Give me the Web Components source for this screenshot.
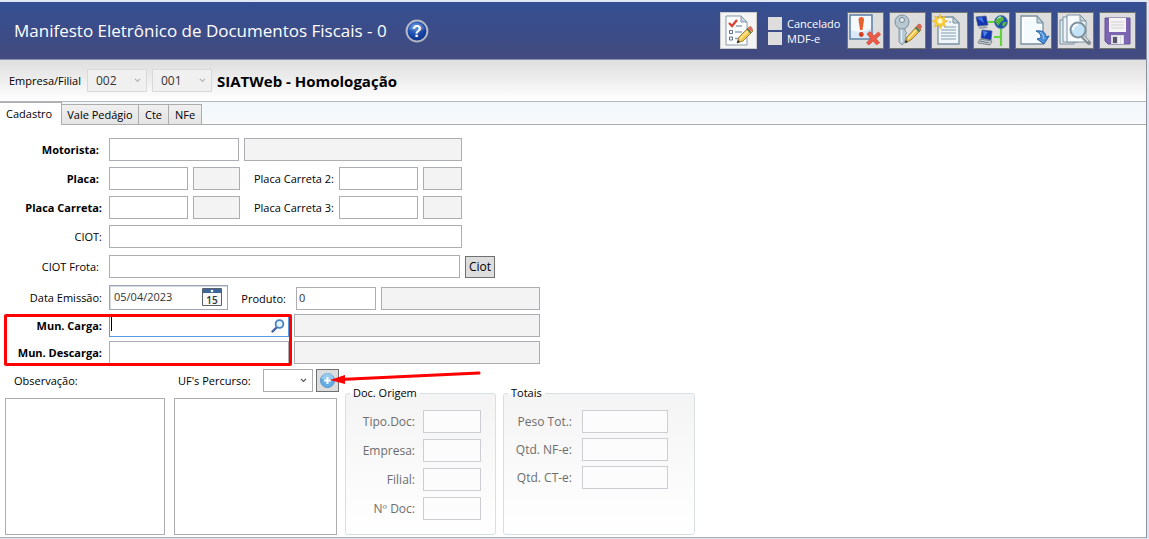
<!DOCTYPE html>
<html lang="pt-BR">
<head>
<meta charset="utf-8">
<title>Manifesto Eletrônico de Documentos Fiscais</title>
<style>
body { margin: 0; background: #fff; color: #000; font: 11px/16px "Open Sans", "Noto Sans", sans-serif; }
</style>
</head>
<body>
<mdf-window></mdf-window>

<template id="t-window">
<style>
:host { display: block; box-sizing: border-box; min-height: 100vh; background: #dfe6f6; padding: 2px 2px 1px 0; }
main { border-right: 1px solid #8e929c; background: #fff; }
</style>
<main>
  <mdf-header></mdf-header>
  <mdf-company></mdf-company>
  <mdf-tabs></mdf-tabs>
  <mdf-form></mdf-form>
</main>
</template>

<template id="t-header">
<style>
:host { display: flex; align-items: center; height: 57px; padding: 0 10px 0 14px; background: linear-gradient(#344f92, #434a7e); border-bottom: 1px solid #8a90ae; color: #fff; }
h1 { margin: 0 18px 0 0; font-size: 17px; line-height: 24px; font-weight: 400; white-space: nowrap; }
.help { border: 0; padding: 0; background: none; width: 24px; height: 24px; margin-right: auto; }
.help svg { display: block; }
.checks { display: grid; gap: 2px; margin: 0 5px 0 11px; width: 74px; }
.checks label { display: flex; align-items: center; gap: 5px; height: 13px; white-space: nowrap; line-height: 13px; }
.checks input { appearance: none; margin: 0; width: 14px; height: 13px; background: #ddd; flex: none; }
.tools { display: flex; gap: 5px; }
</style>
<h1>Manifesto Eletrônico de Documentos Fiscais - 0</h1>
<button class="help" aria-label="Ajuda">
  <svg width="24" height="24" viewBox="0 0 24 24">
    <defs><radialGradient id="g" cx=".4" cy=".3" r=".8"><stop offset="0" stop-color="#4a80d4"/><stop offset=".55" stop-color="#1746a6"/><stop offset="1" stop-color="#0c2b7c"/></radialGradient></defs>
    <circle cx="12" cy="12" r="10.400" fill="url(#g)" stroke="#b4b8c2" stroke-width="2"/>
    <path d="M4 10a8.300 8.300 0 0 1 16 0c-5 2-11 2-16 0Z" fill="#fff" opacity=".16"/>
    <text x="12" y="18" text-anchor="middle" font-size="16" font-weight="700" fill="#fff">?</text>
  </svg>
</button>
<tool-button light name="Validar">
  <svg viewBox="0 0 35 35">
    <path d="M5 3h15l6 6v23H5z" fill="#fbfdfe" stroke="#8799a5"/><path d="M20 3v6h6z" fill="#c8d6df" stroke="#8799a5"/>
    <path d="M8 10l3 3 5-6" fill="none" stroke="#d8432f" stroke-width="2.300"/>
    <path d="M8.500 17.500h3v3h-3zM8.500 24h3v3h-3z" fill="#fff" stroke="#5c7080"/>
    <path d="M15 13h6M14 19h7M14 25.500h5" stroke="#8fa5b5" stroke-width="1.500"/>
    <path d="M16 30l2-6 10-10 4 4-10 10z" fill="#f2c64c" stroke="#80601d" stroke-width=".7"/><path d="M19 26l10-10" stroke="#fff0a5" stroke-width="1.300"/>
    <path d="M26 16l3-3q2 0 3 4l-3 2z" fill="#dc7566"/><path d="M26 16l4 4" stroke="#4c7a58" stroke-width="1.500"/><path d="M16 30l1-3 2 2z" fill="#222"/>
  </svg>
</tool-button>
<div class="checks">
  <label><input type="checkbox">Cancelado</label>
  <label><input type="checkbox">MDF-e</label>
</div>
<div class="tools">
<tool-button name="Cancelar">
  <svg viewBox="0 0 35 35">
    <path d="M2 2h22v24H2z" fill="#d9e9f8" stroke="#5f80a5" stroke-width="1.500"/><path d="M3 17c8 3 14 2 20-2V3H3z" fill="#fff" opacity=".7"/>
    <path d="M10.500 7q0-3 2.800-3t2.700 3l-1.500 10h-2.400z" fill="#e8602c"/><circle cx="13.300" cy="21.500" r="2.400" fill="#d93a1c"/>
    <path d="M19 21l3-2.500 4 4.500 4.500-4 2 2.500-4.500 4.200 3.500 4-3 2-3.500-3.700-4 4-2.500-2 4.200-4.500z" fill="#ec5a48" stroke="#d0402f" stroke-width=".7"/>
  </svg>
</tool-button>
<tool-button name="Chave">
  <svg viewBox="0 0 35 35">
    <path d="M9 14h6v4l2 2-2 2 1 2-1 3v2l-3 3-3-3z" fill="#b8cad5" stroke="#768b98" stroke-width=".8"/><path d="M11.500 16v13" stroke="#edf3f6"/>
    <circle cx="12" cy="9" r="7" fill="#b8c8d2" stroke="#7b909d"/><circle cx="12" cy="7" r="2.500" fill="#e3e7e9" stroke="#738896"/>
    <path d="M15 30l2-6 10-11 4 4-10 10z" fill="#efc047" stroke="#80601d" stroke-width=".7"/><path d="M18 26l10-11" stroke="#fff0a5" stroke-width="1.300"/>
    <path d="M26 14l2-3q3-1 4 3l-2 3z" fill="#d86657"/><path d="M25.500 14.500l4 4" stroke="#4c7a58" stroke-width="1.800"/><path d="M15 30l1-3 2 2z" fill="#222"/>
  </svg>
</tool-button>
<tool-button name="Novo">
  <svg viewBox="0 0 35 35">
    <path d="M6 4h15l6 6v21H6z" fill="#eff5f8" stroke="#7891a0" stroke-width="1.300"/><path d="M21 4v6h6z" fill="#bfd0d9" stroke="#7891a0"/>
    <path d="M17 9h2M12 14h12M9 17h15M9 20h15M9 23h15M9 26h15" stroke="#a8bbc8" stroke-width="1.500"/>
    <path d="M8 1l1.500 4L13 3l-1 4 4 1-4 2 2 4-4-2-1.500 4-2-4-4 2 1.500-4L0 8l4-1.500L2.500 3l4 2z" fill="#f8ce35" stroke="#e8af29" stroke-width=".6"/><circle cx="8" cy="8" r="2.500" fill="#fffbd5"/>
  </svg>
</tool-button>
<tool-button name="Transmitir">
  <svg viewBox="0 0 35 35">
    <path d="M14 9h8M27 15v18M20 24h7" fill="none" stroke="#61d43d" stroke-width="2.200"/>
    <path d="M2 4l10-1 2 9-10 1z" fill="#1535b3" stroke="#4c5c80" stroke-width=".7"/><path d="M3 5l5-1 2 6z" fill="#4478e8"/><path d="M4 14l8-1 2 2-8 1z" fill="#9ba5ad"/>
    <circle cx="27" cy="9" r="6.500" fill="#2054b4" stroke="#4d6d96" stroke-width=".6"/><path d="M25 3l4 1 1 3-3 2-3 4-3-5zM29 9l4 0-3 5-2-2z" fill="#56b540"/><path d="M23 6q1-2 4-2" stroke="#cceeff" fill="none"/>
    <path d="M8 17l10 1-1 9-10-2z" fill="#1537b4" stroke="#4c5c80" stroke-width=".7"/><path d="M9 18l5 1-4 5z" fill="#4c83e9"/><path d="M6 26l12 2-2 4-12-2z" fill="#c5cdd4" stroke="#56616b" stroke-width=".7"/><path d="M6 28l9 2" stroke="#6d7881"/>
  </svg>
</tool-button>
<tool-button name="Exportar">
  <svg viewBox="0 0 35 35">
    <path d="M5 3h16l6 7v21H5z" fill="#f5fafc" stroke="#7891a0" stroke-width="1.300"/><path d="M21 3v7h6z" fill="#bfd0d9" stroke="#7891a0"/><path d="M7 29V5h12" fill="none" stroke="#fff" stroke-width="2"/>
    <path d="M20 18c7-1 10 2 10 6l3-1-5 8-7-5 4-1c0-3-1-5-5-7z" fill="#4f91d9" stroke="#2861a7"/><path d="M24 19q4 2 4 7" stroke="#a7cff5" fill="none"/>
  </svg>
</tool-button>
<tool-button name="Visualizar">
  <svg viewBox="0 0 35 35">
    <path d="M2 7h14v24H2z" fill="#dfe9ee" stroke="#7891a0"/><path d="M5 4h15v25H5z" fill="#edf3f6" stroke="#7891a0"/>
    <path d="M9 2h13l6 6v21H9z" fill="#f8fbfc" stroke="#7891a0"/><path d="M22 2v6h6z" fill="#c5d4dc" stroke="#7891a0"/>
    <path d="M24 23l7 7" stroke="#828d95" stroke-width="4" stroke-linecap="round"/><path d="M25 23l5 5" stroke="#e1e5e8" stroke-width="1.200"/>
    <circle cx="20" cy="17" r="7.500" fill="#c3e2f5" stroke="#82929d" stroke-width="2"/><path d="M15 17q0-5 5-5.500" stroke="#fff" stroke-width="2" fill="none"/>
  </svg>
</tool-button>
<tool-button name="Salvar">
  <svg viewBox="0 0 35 35">
    <path d="M5 5h25v26H8l-3-3z" fill="#7c65b1" stroke="#66509a"/><path d="M9 5h17v14H9z" fill="#f5f4f5"/><path d="M11 9h13M11 12h13M11 15h13" stroke="#d0cfd2"/>
    <path d="M11 22h13v9H11z" fill="#d8dcde"/><path d="M13 24h4v6h-4z" fill="#59546b"/><path d="M19 23v8M22 23v8" stroke="#fff"/>
  </svg>
</tool-button>
</div>
</template>

<template id="t-tool">
<style>
:host { display: block; flex: none; }
button { display: block; width: 37px; height: 37px; padding: 0; border: 1px solid #77766d; background: #ddd; }
:host([light]) button { background: #f4f4f4; border-color: #ccc; }
::slotted(svg) { display: block; width: 35px; height: 35px; }
</style>
<button><slot></slot></button>
</template>

<template id="t-company">
<style>
:host { display: flex; align-items: center; gap: 5px; height: 41px; padding-left: 9px; background: linear-gradient(#dedede, #fff); border-bottom: 1px solid #b4b6ba; }
span { width: 73px; white-space: nowrap; }
strong { font-size: 15px; line-height: 20px; white-space: nowrap; }
mdf-select { --w: 60px; }
</style>
<span>Empresa/Filial</span>
<mdf-select disabled value="002" name="Empresa"></mdf-select>
<mdf-select disabled value="001" name="Filial"></mdf-select>
<strong>SIATWeb - Homologação</strong>
</template>

<template id="t-select">
<style>
:host { display: inline-grid; width: var(--w, 50px); height: 23px; align-items: center; }
select, svg { grid-area: 1 / 1; }
select { appearance: none; box-sizing: border-box; width: 100%; height: 23px; margin: 0; padding: 0 8px; border: 1px solid #acacb0; border-radius: 0; background: #fff; color: #000; font: inherit; opacity: 1; }
select:disabled { background: #f0f0f0; border-color: #d9d9d9; color: #333; font-size: 12px; }
svg { justify-self: end; margin-right: 6px; color: #555; pointer-events: none; }
:host([disabled]) svg { color: #b4b4b4; }
</style>
<select><option></option></select>
<svg width="7" height="5" viewBox="0 0 7 5"><path d="M1 .8l2.500 2.500L6 .8" fill="none" stroke="currentColor" stroke-width="1.200"/></svg>
</template>

<template id="t-tabs">
<style>
:host { display: flex; align-items: flex-end; height: 23px; background: linear-gradient(#f2f7fb, #f8fafb); box-shadow: inset 0 -1px #acacac; }
button { box-sizing: border-box; height: 21px; margin: 0; padding: 0 4px; border: 1px solid #acacac; border-left-width: 0; background: linear-gradient(#f0f0f0, #e4e4e4); color: #000; font: inherit; white-space: nowrap; }
button[aria-selected=true] { height: 23px; width: 62px; padding: 0 6px; background: #fff; border-bottom: 0; text-align: left; }
.wide { width: 77px; } .mid { width: 30px; } .nfe { width: 33px; }
</style>
<button role="tab" aria-selected="true">Cadastro</button>
<button role="tab" class="wide">Vale Pedágio</button>
<button role="tab" class="mid">Cte</button>
<button role="tab" class="nfe">NFe</button>
</template>

<template id="t-field">
<style>
:host { display: flex; align-items: center; }
label { box-sizing: border-box; width: var(--label, 109px); padding-right: var(--end, 7px); text-align: right; white-space: nowrap; flex: none; }
:host([bold]) label { font-weight: 700; }
.box { position: relative; display: flex; width: var(--w, 130px); }
input { box-sizing: border-box; width: 100%; height: 23px; margin: 0; padding: 0 2px 3px; border: 1px solid #abadb3; border-radius: 0; background: #fff; color: #333; font: inherit; outline: 0; }
:host([active]) input { border-color: #569de5; }
:host([tall]) input { height: 25px; border-color: #9ba5b3; box-shadow: inset 1px 1px #d5dae0; padding: 0 4px 2px; }
:host([disabled]) label { color: #6d6d6d; font-size: 12px; }
:host([disabled]) input { background: #fcfcfc; border-color: #ccced1; }
::slotted(*) { position: absolute; }
</style>
<label for="i"></label><span class="box"><input id="i" type="text"><slot></slot></span>
</template>

<template id="t-read">
<style>
:host { display: block; width: var(--w); }
input { display: block; box-sizing: border-box; width: 100%; height: 23px; margin: 0; border: 1px solid #abadb3; border-radius: 0; background: #f3f3f3; font: inherit; outline: 0; }
</style>
<input type="text" readonly>
</template>

<template id="t-group">
<style>
:host { display: block; }
fieldset { box-sizing: border-box; height: 100%; min-width: 0; margin: 0; padding: 9px var(--right, 14px) 0 0; border: 1px solid #d5dfe5; border-radius: 3px; background: linear-gradient(#f4f4f4, #fff); }
legend { margin-left: 4px; padding: 0 3px; line-height: 16px; }
div { display: grid; gap: var(--gap, 6px); justify-content: end; }
</style>
<fieldset><legend></legend><div><slot></slot></div></fieldset>
</template>

<template id="t-form">
<style>
:host { display: block; padding: 13px 0 2px; border-bottom: 1px solid #acacac; }
.row { display: flex; align-items: flex-end; gap: 5px; }
.rows { display: grid; gap: 6px; margin-bottom: 7px; }
.codes { gap: 4px; margin-bottom: 5px; }
.soft { --end: 10px; }
.second { --label: 94px; --end: 5px; }
.plate { --w: 79px; }
.marked { position: relative; display: grid; gap: 4px; }
.mark { position: absolute; left: 4px; top: 0; width: 288px; height: 52px; box-sizing: border-box; border: 3px solid #fe0000; border-radius: 2px; pointer-events: none; }
button { box-sizing: border-box; padding: 0; border: 1px solid #707070; background: #ddd; color: #000; font: inherit; }
.ciot { width: 30px; height: 22px; font-size: 12px; }
.cal { right: 6px; top: 3px; }
.lens { right: 4px; top: 5px; }
.caret { left: 2px; top: 3px; width: 1px; height: 14px; background: #000; }
.lower { display: grid; grid-template-columns: 333px 151px 192px; column-gap: 7px; padding-left: 5px; }
.left { display: grid; grid-template-columns: 160px 165px; gap: 6px 9px; }
.cap { display: flex; align-items: center; padding-left: 9px; }
.uf { position: relative; display: flex; align-items: center; justify-content: flex-end; gap: 3px; }
.uf label { margin: 0 auto 0 4px; white-space: nowrap; }
.add { width: 23px; height: 23px; }
.add svg { display: block; margin: auto; }
.arrow { position: absolute; left: 152px; top: 0; pointer-events: none; }
textarea { display: block; box-sizing: border-box; height: 137px; width: 100%; margin: 0; border: 1px solid #abadb3; border-radius: 0; resize: none; background: #fff; outline: 0; }
.ufs { width: 163px; }
mdf-group { margin-top: 16px; }
.origin { --w: 58px; --label: 76px; --end: 8px; }
.totals { --w: 86px; --label: 78px; --end: 10px; --right: 26px; --gap: 5px; }
</style>
<div class="rows">
  <div class="row"><mdf-field class="soft" bold label="Motorista:"></mdf-field><mdf-read name="Nome do motorista" style="--w:218px"></mdf-read></div>
  <div class="row"><mdf-field class="plate soft" bold label="Placa:"></mdf-field><mdf-read name="UF da placa" style="--w:47px"></mdf-read><mdf-field class="plate second" label="Placa Carreta 2:"></mdf-field><mdf-read name="UF carreta 2" style="--w:39px"></mdf-read></div>
  <div class="row"><mdf-field class="plate" bold label="Placa Carreta:"></mdf-field><mdf-read name="UF da carreta" style="--w:47px"></mdf-read><mdf-field class="plate second" label="Placa Carreta 3:"></mdf-field><mdf-read name="UF carreta 3" style="--w:39px"></mdf-read></div>
  <div class="row"><mdf-field label="CIOT:" style="--w:353px"></mdf-field></div>
</div>
<div class="rows"><div class="row"><mdf-field class="soft" label="CIOT Frota:" style="--w:351px"></mdf-field><button class="ciot">Ciot</button></div></div>
<div class="rows codes">
  <div class="row">
    <mdf-field tall label="Data Emissão:" value="05/04/2023" style="--w:119px">
      <svg class="cal" width="20" height="18" viewBox="0 0 20 18"><path d="M.5 .5h19v17H.5z" fill="#f8f8f8" stroke="#5b616c"/><path d="M1 1h18v4H1z" fill="#3c6798"/><circle cx="10" cy="3" r="1.300" fill="#fff"/><text x="10" y="15.500" text-anchor="middle" font-size="10" font-weight="600" fill="#333">15</text></svg>
    </mdf-field>
    <mdf-field label="Produto:" value="0" style="--w:80px;--label:63px;--end:10px"></mdf-field><mdf-read name="Nome do produto" style="--w:159px"></mdf-read>
  </div>
  <div class="marked">
    <div class="row"><mdf-field bold active label="Mun. Carga:" style="--w:180px">
      <span class="caret"></span>
      <svg class="lens" width="14" height="14" viewBox="0 0 14 14"><path d="M6 8l-4.500 4.500" stroke="#3a61a0" stroke-width="2.300" stroke-linecap="round"/><circle cx="8.500" cy="5" r="3.900" fill="#e3f3fd" stroke="#4a80c0" stroke-width="1.800"/></svg>
    </mdf-field><mdf-read name="Município de carga" style="--w:246px"></mdf-read></div>
    <div class="row"><mdf-field bold label="Mun. Descarga:" style="--w:180px"></mdf-field><mdf-read name="Município de descarga" style="--w:246px"></mdf-read></div>
    <div class="mark"></div>
  </div>
</div>
<div class="lower">
  <div class="left">
    <label class="cap" for="obs">Observação:</label>
    <div class="uf"><label for="ufs">UF's Percurso:</label><mdf-select name="UF"></mdf-select>
      <button class="add" aria-label="Adicionar UF"><svg width="17" height="17" viewBox="0 0 17 17"><circle cx="8.500" cy="8.500" r="7" fill="#62aee7" stroke="#5a92c8"/><path d="M2.500 7a6 6 0 0 1 12 0z" fill="#b7dcf7" opacity=".6"/><path d="M8.500 5v7M5 8.500h7" stroke="#fff" stroke-width="2"/></svg></button>
      <svg class="arrow" width="158" height="18" viewBox="0 0 158 18"><path d="M14 10.500L153 4" stroke="#fe0000" stroke-width="3" stroke-linecap="round"/><path d="M4 11l15-5v9z" fill="#fe0000"/></svg>
    </div>
    <textarea id="obs"></textarea>
    <textarea id="ufs" class="ufs"></textarea>
  </div>
  <mdf-group class="origin" label="Doc. Origem">
    <mdf-field disabled label="Tipo.Doc:"></mdf-field><mdf-field disabled label="Empresa:"></mdf-field><mdf-field disabled label="Filial:"></mdf-field><mdf-field disabled label="Nº Doc:"></mdf-field>
  </mdf-group>
  <mdf-group class="totals" label="Totais">
    <mdf-field disabled label="Peso Tot.:"></mdf-field><mdf-field disabled label="Qtd. NF-e:"></mdf-field><mdf-field disabled label="Qtd. CT-e:"></mdf-field>
  </mdf-group>
</div>
</template>

<script>
class Base extends HTMLElement {
  constructor() {
    super();
    this.attachShadow({ mode: "open" }).append(
      document.getElementById(this.constructor.template).content.cloneNode(true));
  }
  find(selector) { return this.shadowRoot.querySelector(selector); }
}
class ToolButton extends Base {
  static template = "t-tool";
  connectedCallback() { this.find("button").setAttribute("aria-label", this.getAttribute("name")); }
}
class MdfSelect extends Base {
  static template = "t-select";
  connectedCallback() {
    const select = this.find("select");
    this.find("option").textContent = this.getAttribute("value") || "";
    select.disabled = this.hasAttribute("disabled");
    select.setAttribute("aria-label", this.getAttribute("name"));
  }
}
class MdfField extends Base {
  static template = "t-field";
  connectedCallback() {
    this.find("label").textContent = this.getAttribute("label");
    this.find("input").value = this.getAttribute("value") || "";
    this.find("input").disabled = this.hasAttribute("disabled");
  }
}
class MdfRead extends Base {
  static template = "t-read";
  connectedCallback() { this.find("input").setAttribute("aria-label", this.getAttribute("name")); }
}
class MdfGroup extends Base {
  static template = "t-group";
  connectedCallback() { this.find("legend").textContent = this.getAttribute("label"); }
}
customElements.define("tool-button", ToolButton);
customElements.define("mdf-select", MdfSelect);
customElements.define("mdf-field", MdfField);
customElements.define("mdf-read", MdfRead);
customElements.define("mdf-group", MdfGroup);
for (const name of ["header", "company", "tabs", "form", "window"]) {
  customElements.define("mdf-" + name, class extends Base { static template = "t-" + name; });
}
</script>
</body>
</html>
